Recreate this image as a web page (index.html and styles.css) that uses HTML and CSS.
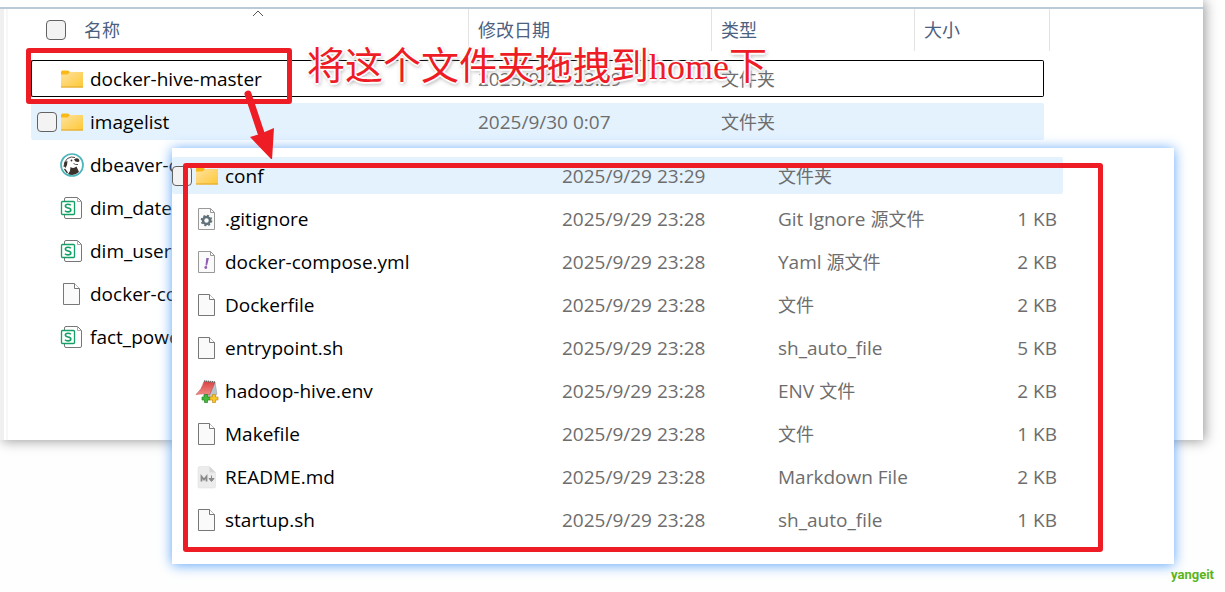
FILE: index.html
```html
<!DOCTYPE html>
<html lang="zh-CN">
<head>
    <meta charset="UTF-8">
    <meta name="viewport" content="width=device-width, initial-scale=1.0">
    <title>docker-hive-master</title>
    <link rel="stylesheet" href="styles.css">
</head>
<body>
    <!-- shared icons -->
    <svg class="sprite" aria-hidden="true">
        <defs>
            <linearGradient id="folderFill" x1="0" y1="0" x2="1" y2="1">
                <stop offset="0" stop-color="#ffe2a0"/>
                <stop offset="1" stop-color="#fdc834"/>
            </linearGradient>
            <linearGradient id="padFill" x1="0" y1="0" x2="0" y2="1">
                <stop offset="0" stop-color="#d94444"/>
                <stop offset="1" stop-color="#f08a84"/>
            </linearGradient>
        </defs>
        <symbol id="folder" viewBox="0 0 24 24">
            <path d="M1 5q0-1.500 1.500-1.500h5.500l2 1.500v4h-9z" fill="#f9b916"/>
            <path d="M1 7.500h6.500l2.500-2.500h13v15.500h-22z" fill="url(#folderFill)"/>
            <path d="M1 20h22" stroke="#e3a52c"/>
        </symbol>
        <symbol id="file" viewBox="0 0 24 24">
            <path d="M3.500 1.500h11l5 5v16h-16z" fill="#fafafa" stroke="#777"/>
            <path d="M14.500 1.500v5h5" fill="#fff" stroke="#777"/>
        </symbol>
        <symbol id="gear" viewBox="0 0 24 24">
            <path d="M3.500 1.500h12l4 4v17h-16z" fill="#fafafa" stroke="#999"/>
            <path d="M15.500 1.500v4h4" fill="none" stroke="#999"/>
            <circle cx="11.500" cy="13.500" r="3.500" fill="none" stroke="#5f7078" stroke-width="2.500"/>
            <circle cx="11.500" cy="13.500" r="5" fill="none" stroke="#5f7078" stroke-width="1.600" stroke-dasharray="2 1.927"/>
        </symbol>
        <symbol id="yaml" viewBox="0 0 24 24">
            <path d="M3.500 1.500h12l4 4v17h-16z" fill="#fafafa" stroke="#999"/>
            <path d="M15.500 1.500v4h4" fill="none" stroke="#999"/>
            <path d="M11.300 8h2.600l-1.800 7.500h-1.600z" fill="#8e5bb5"/>
            <circle cx="10.800" cy="17.500" r="1.400" fill="#8e5bb5"/>
        </symbol>
        <symbol id="sheet" viewBox="0 0 24 24">
            <path d="M4.500 5v-2q0-1.500 1.500-1.500h11.500l4 4v15.500q0 1.500-1.500 1.500h-14q-1.500 0-1.500-1.500v-2" fill="#fff" stroke="#777"/>
            <path d="M17.500 1.500v4h4" fill="none" stroke="#aaa"/>
            <rect x="1.500" y="5.500" width="13" height="13" rx="1" fill="#fff" stroke="#12a064" stroke-width="1.300"/>
            <path d="M10.800 9.300q-1-1.100-2.800-1.100q-2.600 0-2.600 1.900q0 1.500 2.600 1.900q2.800.400 2.800 2q0 1.900-2.800 1.900q-2 0-3-1.200" fill="none" stroke="#12a064" stroke-width="1.600"/>
        </symbol>
        <symbol id="beaver" viewBox="0 0 24 24">
            <circle cx="12" cy="12" r="11" fill="#fff" stroke="#4cb5ba" stroke-width="1.700"/>
            <path d="M4 14q-.5-5 3.500-8.500q4-2.500 7.500-1" fill="none" stroke="#3a302c" stroke-width=".9"/>
            <path d="M5 9l2.500-1-.5 4-1.500 3-1.500-2z" fill="#3a302c"/>
            <path d="M14 6.500q3-2.500 5 0q1 2-1 2.500q-3 0-4-2.500z" fill="#3a302c"/>
            <circle cx="11.500" cy="7.500" r=".9" fill="#3a302c"/>
            <path d="M10.500 14q3 2 6-.5l2.500 5.500q-5 4.500-11 2l2-3z" fill="#3a302c"/>
            <path d="M13.500 10.500q2 1.500 4.500 1" fill="none" stroke="#3a302c" stroke-width=".8"/>
            <path d="M4.500 16l3 4" stroke="#3a302c" stroke-width="1.300"/>
        </symbol>
        <symbol id="notepad" viewBox="0 0 24 24">
            <path d="M20 3l2 12-4 5-10-3z" fill="#b8c4cc" stroke="#8c989f" stroke-width=".5"/>
            <path d="M9 2.500l11 1-5.500 12.500q-7-2-13.500-.5q6-5 8-13z" fill="url(#padFill)" stroke="#b83a38" stroke-width=".5"/>
            <path d="M9 2l11 1" stroke="#666" stroke-width="1.500" stroke-dasharray="1.300 .7"/>
            <path d="M9.500 15.500h3v2.500h2.500v3h-2.500v2.500h-3v-2.500h-2.500v-3h2.500z" fill="#45b83c" stroke="#238423" stroke-width=".7"/>
            <path d="M17.500 15.500h3v2.500h2.500v3h-2.500v2.500h-3v-2.500h-2.500v-3h2.500z" fill="#f7c62c" stroke="#c78c14" stroke-width=".7"/>
        </symbol>
        <symbol id="markdown" viewBox="0 0 24 24">
            <path d="M4.500 1.500h10l6 6v14q0 1.500-1.500 1.500h-14.500q-1.500 0-1.500-1.500v-18.500q0-1.500 1.500-1.500z" fill="#ececec" stroke="#e0e0e0" stroke-width=".6"/>
            <path d="M14.500 1.500v4.500q0 1.500 1.500 1.500h4.500z" fill="#d5d5d5"/>
            <path d="M6.500 16.500v-5l2.500 3 2.500-3v5" fill="none" stroke="#8a8a8a" stroke-width="1.800"/>
            <path d="M16.500 10.500v5M14 13.500l2.500 3 2.500-3z" fill="#8a8a8a" stroke="#8a8a8a"/>
        </symbol>
    </svg>

    <main class="window main-window">
        <div class="pane">
            <table class="files">
                <colgroup>
                    <col class="col-name">
                    <col class="col-date">
                    <col class="col-type">
                    <col class="col-size">
                    <col>
                </colgroup>
                <thead>
                    <tr>
                        <th>
                            <div class="head-name">
                                <input type="checkbox" class="check" id="all"><label for="all">名称</label>
                                <svg class="sort" viewBox="0 0 12 7"><path d="M1 6l5-5 5 5" fill="none" stroke="#555"/></svg>
                            </div>
                        </th>
                        <th>修改日期</th>
                        <th>类型</th>
                        <th colspan="2">大小</th>
                    </tr>
                </thead>
                <tbody>
                    <tr class="focused">
                        <td><label class="name"><input type="checkbox" class="check"><svg class="icon"><use href="#folder"/></svg>docker-hive-master</label></td>
                        <td>2025/9/29 23:29</td>
                        <td><span class="zh">文件夹</span></td>
                        <td></td>
                    </tr>
                    <tr class="hovered">
                        <td><label class="name"><input type="checkbox" class="check"><svg class="icon"><use href="#folder"/></svg>imagelist</label></td>
                        <td>2025/9/30 0:07</td>
                        <td><span class="zh">文件夹</span></td>
                        <td></td>
                    </tr>
                    <tr>
                        <td><label class="name"><input type="checkbox" class="check"><svg class="icon"><use href="#beaver"/></svg>dbeaver-c</label></td>
                    </tr>
                    <tr>
                        <td><label class="name"><input type="checkbox" class="check"><svg class="icon"><use href="#sheet"/></svg>dim_date</label></td>
                    </tr>
                    <tr>
                        <td><label class="name"><input type="checkbox" class="check"><svg class="icon"><use href="#sheet"/></svg>dim_user.</label></td>
                    </tr>
                    <tr>
                        <td><label class="name"><input type="checkbox" class="check"><svg class="icon"><use href="#file"/></svg>docker-co</label></td>
                    </tr>
                    <tr>
                        <td><label class="name"><input type="checkbox" class="check"><svg class="icon"><use href="#sheet"/></svg>fact_powe</label></td>
                    </tr>
                </tbody>
            </table>
        </div>
    </main>

    <section class="window sub-window">
        <table class="files">
            <colgroup>
                <col class="col-name">
                <col class="col-date">
                <col class="col-type">
                <col class="col-size">
            </colgroup>
            <tbody>
                <tr class="hovered">
                    <td><label class="name"><input type="checkbox" class="check"><svg class="icon"><use href="#folder"/></svg>conf</label></td>
                    <td>2025/9/29 23:29</td>
                    <td><span class="zh">文件夹</span></td>
                    <td></td>
                </tr>
                <tr>
                    <td><label class="name"><input type="checkbox" class="check"><svg class="icon"><use href="#gear"/></svg>.gitignore</label></td>
                    <td>2025/9/29 23:28</td>
                    <td>Git Ignore <span class="zh">源文件</span></td>
                    <td>1 KB</td>
                </tr>
                <tr>
                    <td><label class="name"><input type="checkbox" class="check"><svg class="icon"><use href="#yaml"/></svg>docker-compose.yml</label></td>
                    <td>2025/9/29 23:28</td>
                    <td>Yaml <span class="zh">源文件</span></td>
                    <td>2 KB</td>
                </tr>
                <tr>
                    <td><label class="name"><input type="checkbox" class="check"><svg class="icon"><use href="#file"/></svg>Dockerfile</label></td>
                    <td>2025/9/29 23:28</td>
                    <td><span class="zh">文件</span></td>
                    <td>2 KB</td>
                </tr>
                <tr>
                    <td><label class="name"><input type="checkbox" class="check"><svg class="icon"><use href="#file"/></svg>entrypoint.sh</label></td>
                    <td>2025/9/29 23:28</td>
                    <td>sh_auto_file</td>
                    <td>5 KB</td>
                </tr>
                <tr>
                    <td><label class="name"><input type="checkbox" class="check"><svg class="icon"><use href="#notepad"/></svg>hadoop-hive.env</label></td>
                    <td>2025/9/29 23:28</td>
                    <td>ENV <span class="zh">文件</span></td>
                    <td>2 KB</td>
                </tr>
                <tr>
                    <td><label class="name"><input type="checkbox" class="check"><svg class="icon"><use href="#file"/></svg>Makefile</label></td>
                    <td>2025/9/29 23:28</td>
                    <td><span class="zh">文件</span></td>
                    <td>1 KB</td>
                </tr>
                <tr>
                    <td><label class="name"><input type="checkbox" class="check"><svg class="icon"><use href="#markdown"/></svg>README.md</label></td>
                    <td>2025/9/29 23:28</td>
                    <td>Markdown File</td>
                    <td>2 KB</td>
                </tr>
                <tr>
                    <td><label class="name"><input type="checkbox" class="check"><svg class="icon"><use href="#file"/></svg>startup.sh</label></td>
                    <td>2025/9/29 23:28</td>
                    <td>sh_auto_file</td>
                    <td>1 KB</td>
                </tr>
            </tbody>
        </table>
        <div class="mark mark-files"></div>
    </section>

    <!-- annotations -->
    <div class="mark mark-folder"></div>
    <p class="note">将这个文件夹拖拽到<span class="latin">home</span>下</p>
    <svg class="arrow" viewBox="0 0 34 72">
        <path d="M8 7L21 46" stroke="#ee1c25" stroke-width="7" stroke-linecap="round"/>
        <path d="M10 50l10-3 14-6-2 32z" fill="#ee1c25"/>
    </svg>
    <div class="watermark">yangeit</div>
</body>
</html>
```
FILE: styles.css
```css
* {
    margin: 0;
    padding: 0;
    box-sizing: border-box;
}

body {
    position: relative;
    min-height: 100vh;
    background: #fefefe;
    color: #000;
    font-family: "Open Sans", "Noto Sans CJK SC", sans-serif;
    font-size: 19px;
    line-height: 24px;
    overflow: hidden;
}

.sprite {
    position: absolute;
    width: 0;
    height: 0;
}

.window {
    background: #fff;
}

.main-window {
    margin-right: 22px;
    padding-top: 7px;
    box-shadow: 2px 1px 12px rgba(0, 0, 0, 0.4);
}

.pane {
    border-top: 2px solid #b9cbd9;
    padding: 0 0 79px 31px;
    background: linear-gradient(to right, #f0f0f0 4px, #fff 4px, #fff 6px, #f7f7f7 6px, #f7f7f7 8px, #fff 8px);
}

.sub-window {
    position: absolute;
    top: 148px;
    left: 172px;
    right: 51px;
    padding: 3px 0 20px;
    box-shadow: 0 1px 12px #5ca4f8;
}

/* file lists */
.files {
    width: 1019px;
    table-layout: fixed;
    border-collapse: separate;
    border-spacing: 0 6px;
}

.main-window .files {
    margin-top: -6px;
}

.sub-window .files {
    width: 891px;
}

.col-name { width: 438px; }
.col-date { width: 243px; }
.col-type { width: 203px; }
.col-size { width: 129px; }

.sub-window .col-name { width: 381px; }
.sub-window .col-date { width: 216px; }
.sub-window .col-type { width: 203px; }
.sub-window .col-size { width: 91px; }

th {
    height: 45px;
    padding: 0 9px 3px;
    background: linear-gradient(#e3e3e3, #e3e3e3) right top / 1px 42px no-repeat;
    color: #4c6080;
    font-size: 18px;
    font-weight: normal;
    text-align: left;
}

th:first-child {
    padding-left: 15px;
    padding-right: 0;
}

td {
    height: 37px;
    padding: 0 9px;
    color: #6d6d6d;
    white-space: nowrap;
}

td:first-child {
    padding-left: 6px;
    padding-right: 0;
    color: #000;
}

.sub-window td:first-child {
    padding-left: 0;
}

.sub-window td:last-child {
    padding-right: 6px;
    text-align: right;
}

.zh {
    font-size: 18px;
}

.head-name {
    position: relative;
    display: flex;
    align-items: center;
    gap: 18px;
    height: 42px;
}

.sort {
    position: absolute;
    top: 1px;
    left: 50%;
    width: 12px;
    height: 7px;
    margin-left: -6px;
}

.name {
    display: flex;
    align-items: center;
}

.check {
    appearance: none;
    flex: none;
    width: 20px;
    height: 20px;
    border: 1px solid #626262;
    border-radius: 4px;
    background: #f3f3f3;
}

.name .check {
    visibility: hidden;
}

.hovered .check {
    visibility: visible;
}

.icon {
    flex: none;
    width: 24px;
    height: 24px;
    margin: 0 6px 0 3px;
}

.hovered td {
    background: #e4f2fe;
}

.focused td {
    border: solid #000;
    border-width: 1px 0;
}

.focused td:first-child {
    border-left-width: 1px;
    padding-left: 5px;
}

.focused td:last-child {
    border-right-width: 1px;
}

.focused td:first-child,
.hovered td:first-child {
    border-radius: 2px 0 0 2px;
}

.focused td:last-child,
.hovered td:last-child {
    border-radius: 0 2px 2px 0;
}

/* annotations */
.mark {
    position: absolute;
    border: 5px solid #ee1c25;
    border-radius: 3px;
    pointer-events: none;
}

.mark-folder {
    top: 48px;
    left: 26px;
    width: 266px;
    height: 56px;
}

.mark-files {
    top: 15px;
    left: 11px;
    right: 71px;
    bottom: 12px;
}

.note {
    position: absolute;
    top: 41px;
    left: 307px;
    color: #ee1c25;
    font-family: "Noto Sans CJK SC", sans-serif;
    font-size: 38px;
    line-height: 44px;
    white-space: nowrap;
    text-shadow: 0 0 2px #fff, 0 0 2px #fff, 2px 0 1px #fff, -2px 0 1px #fff, 0 2px 1px #fff, 0 -2px 1px #fff, 1px 2px 4px #888;
}

.latin {
    font-family: "Liberation Serif", serif;
    font-size: 36px;
}

.arrow {
    position: absolute;
    top: 87px;
    left: 240px;
    width: 34px;
    height: 72px;
}

.watermark {
    position: absolute;
    right: 11px;
    bottom: 9px;
    color: #5cb41c;
    font-family: Roboto, sans-serif;
    font-size: 13px;
    font-weight: bold;
    line-height: 16px;
}
```
